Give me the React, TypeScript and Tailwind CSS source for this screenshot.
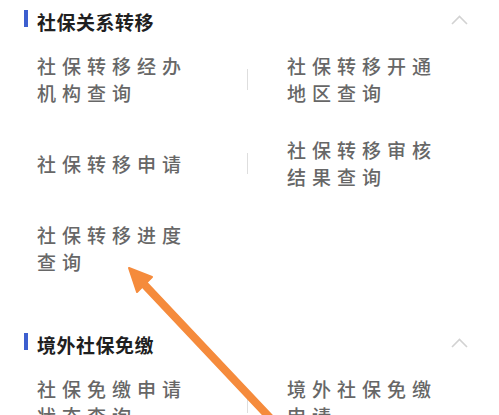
import React from 'react';

type Row = { left: string[]; right?: string[] };

const sections: { title: string; rows: Row[] }[] = [
  {
    title: '社保关系转移',
    rows: [
      { left: ['社保转移经办', '机构查询'], right: ['社保转移开通', '地区查询'] },
      { left: ['社保转移申请'], right: ['社保转移审核', '结果查询'] },
      { left: ['社保转移进度', '查询'] },
    ],
  },
  {
    title: '境外社保免缴',
    rows: [{ left: ['社保免缴申请', '状态查询'], right: ['境外社保免缴', '申请'] }],
  },
];

const rowGaps = ['mt-[8px]', 'mt-[30px]', 'mt-[31px]'];

function Item({ lines }: { lines: string[] }) {
  return (
    <div className="text-[19px] leading-[27px] tracking-[6px] font-medium text-[#676767]">
      {lines.map((l) => (
        <div key={l}>{l}</div>
      ))}
    </div>
  );
}

function Section({ title, rows }: { title: string; rows: Row[] }) {
  return (
    <div>
      {/* Header */}
      <div className="flex items-center h-[44px] pl-[24px] pr-[31px]">
        <div className="w-[4px] h-[17px] bg-[#3d5fcf] mb-[8px]" />
        <div className="ml-[9px] text-[19px] font-bold text-[#1f1f1f] tracking-[0.5px]">{title}</div>
        <div className="flex-1" />
        <svg width="17" height="10" viewBox="0 0 17 10" className="mb-[4px]">
          <path d="M1 9 L8.5 1.5 L16 9" fill="none" stroke="#d2d2d2" strokeWidth="1.6" />
        </svg>
      </div>
      {rows.map((row, i) => (
        <div key={i} className={`${rowGaps[i]} flex items-center h-[54px] pl-[37px]`}>
          <div className="w-[210px]">
            <Item lines={row.left} />
          </div>
          {row.right && (
            <>
              <div className="w-px h-[21px] bg-[#dedede]" />
              <div className="ml-[39px]">
                <Item lines={row.right} />
              </div>
            </>
          )}
        </div>
      ))}
    </div>
  );
}

export default function App() {
  return (
    <div
      className="relative w-[499px] h-[415px] overflow-hidden bg-white"
      style={{ fontFamily: '"Noto Sans CJK SC", "Noto Sans", sans-serif' }}
    >
      <Section {...sections[0]} />
      <div className="mt-[48px]">
        <Section {...sections[1]} />
      </div>

      {/* annotation arrow */}
      <svg className="absolute inset-0 pointer-events-none" width="499" height="415" viewBox="0 0 499 415">
        <line x1="141" y1="281" x2="274" y2="422" stroke="#f58b3c" strokeWidth="8" strokeLinecap="round" />
        <polygon points="129,268 152,277 137,292" fill="#f58b3c" stroke="#f58b3c" strokeWidth="2" strokeLinejoin="round" />
      </svg>
    </div>
  );
}
